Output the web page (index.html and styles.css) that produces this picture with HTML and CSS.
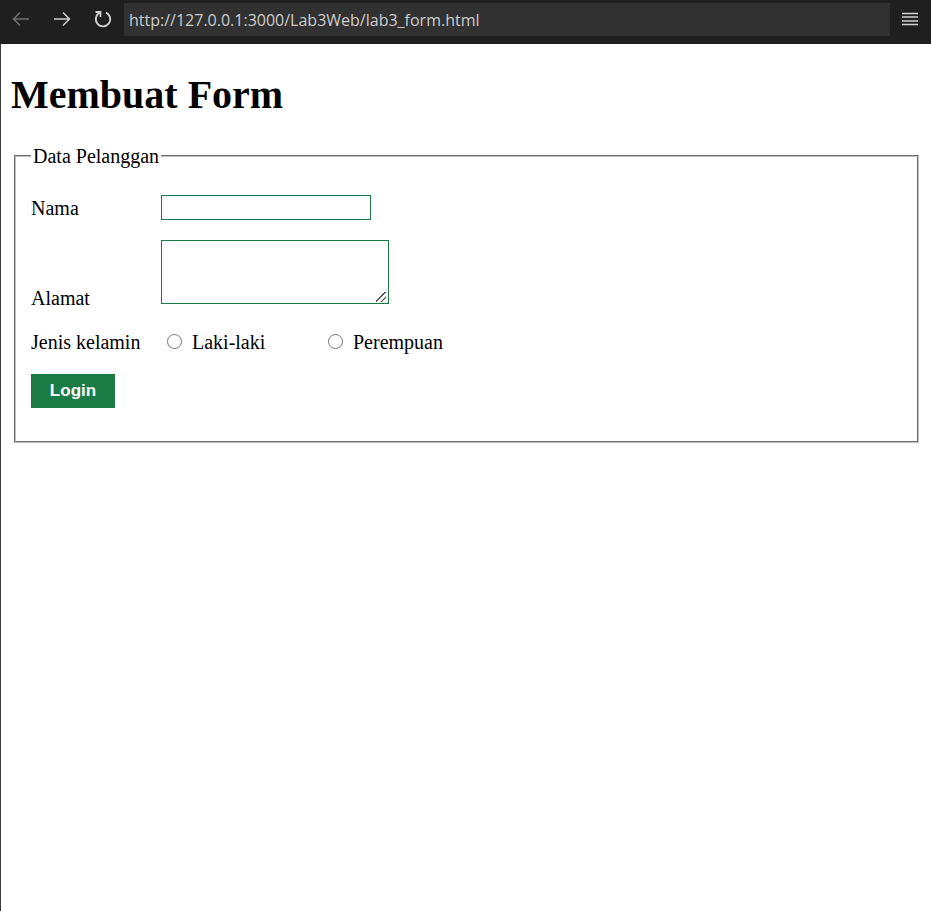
FILE: index.html
```html
<!DOCTYPE html>
<html lang="id">
<head>
<meta charset="utf-8">
<title>Membuat Form</title>
<link rel="stylesheet" href="styles.css">
</head>
<body>
<header class="toolbar">
  <button class="tool back" type="button" aria-label="Back" disabled>
    <svg width="18" height="18" viewBox="0 0 18 18"><path d="M17 9H1.500M8 2.500L1.500 9L8 15.500"/></svg>
  </button>
  <button class="tool" type="button" aria-label="Forward">
    <svg width="18" height="18" viewBox="0 0 18 18"><path d="M1 9H16.500M10 2.500L16.500 9L10 15.500"/></svg>
  </button>
  <button class="tool reload" type="button" aria-label="Reload">
    <svg width="18" height="18" viewBox="0 0 18 18"><path d="M1.500 2H6.500V7M6.300 2.500A7.200 7.200 0 1 0 12 2.600"/></svg>
  </button>
  <input class="address" type="text" aria-label="Address" value="http://127.0.0.1:3000/Lab3Web/lab3_form.html">
  <button class="tool menu" type="button" aria-label="Menu">
    <svg width="16" height="14" viewBox="0 0 16 14"><path d="M0 1.500H16M0 5H16M0 9H16M0 12.500H16"/></svg>
  </button>
</header>
<main class="page">
  <h1 class="title">Membuat Form</h1>
  <form>
    <fieldset class="panel">
      <legend class="legend">Data Pelanggan</legend>
      <div class="row">
        <label class="label" for="nama">Nama</label>
        <input class="field" id="nama" type="text">
      </div>
      <div class="row row-end">
        <label class="label" for="alamat">Alamat</label>
        <textarea class="field area" id="alamat"></textarea>
      </div>
      <div class="row" role="radiogroup" aria-labelledby="kelamin">
        <span class="label" id="kelamin">Jenis kelamin</span>
        <label class="choice"><input class="radio" type="radio" name="kelamin">Laki-laki</label>
        <label class="choice"><input class="radio" type="radio" name="kelamin">Perempuan</label>
      </div>
      <button class="submit" type="button">Login</button>
    </fieldset>
  </form>
</main>
</body>
</html>
```
FILE: styles.css
```css
* {
  box-sizing: border-box;
}

body {
  margin: 0;
  min-height: 100vh;
  display: flex;
  flex-direction: column;
  background: #fff;
  color: #000;
  font-family: "Liberation Serif", "Times New Roman", serif;
  font-size: 20px;
  line-height: 24px;
}

.toolbar {
  display: flex;
  align-items: center;
  height: 44px;
  padding: 0 1px 6px 0;
  background: #1f1f1f;
}

.tool {
  display: flex;
  align-items: center;
  justify-content: center;
  flex: none;
  width: 41px;
  height: 32px;
  padding: 0;
  border: 0;
  background: none;
}

.tool path {
  fill: none;
  stroke: #d0d0d0;
  stroke-width: 1.5;
}

.back path {
  stroke: #707070;
}

.reload path {
  stroke-width: 1.8;
}

.menu {
  width: 40px;
}

.address {
  flex: 1;
  min-width: 0;
  height: 33px;
  margin-left: 1px;
  padding: 2px 5px 0;
  border: 0;
  background: #313131;
  color: #ccc;
  font-family: "Segoe UI", "Open Sans", sans-serif;
  font-size: 16px;
}

.page {
  flex: 1;
  padding: 27px 12px 27px 10px;
  border-left: 1px solid #3c3c3c;
}

.title {
  margin: 0 0 25px;
  font-size: 40px;
  line-height: 48px;
}

.panel {
  margin: 0 0 0 3px;
  padding: 27px 15px 33px;
  border: 2px groove #c0c0c0;
}

.legend {
  padding: 0 2px;
}

.row {
  display: flex;
  align-items: center;
  margin-bottom: 20px;
}

.row-end {
  align-items: flex-end;
}

.label {
  width: 130px;
}

.field {
  width: 210px;
  height: 25px;
  padding: 2px;
  border: 1px solid #1b7b45;
  border-radius: 0;
  background: #fff;
  font-size: 16px;
}

.area {
  width: 228px;
  height: 64px;
  margin-bottom: 6px;
}

.area::-webkit-resizer {
  background: linear-gradient(135deg, transparent 41%, #555 44%, #555 50%, transparent 53%, transparent 69%, #555 72%, #555 78%, transparent 81%) 3px 4px / 10px 10px no-repeat;
}

.choice {
  display: flex;
  align-items: baseline;
  width: 161px;
}

.radio {
  width: 15px;
  height: 15px;
  margin: 0 10px 0 6px;
}

.submit {
  width: 84px;
  height: 34px;
  padding: 0;
  border: 0;
  background: #1b7b45;
  color: #fff;
  font: bold 17px "Liberation Sans", Arial, sans-serif;
}
```
